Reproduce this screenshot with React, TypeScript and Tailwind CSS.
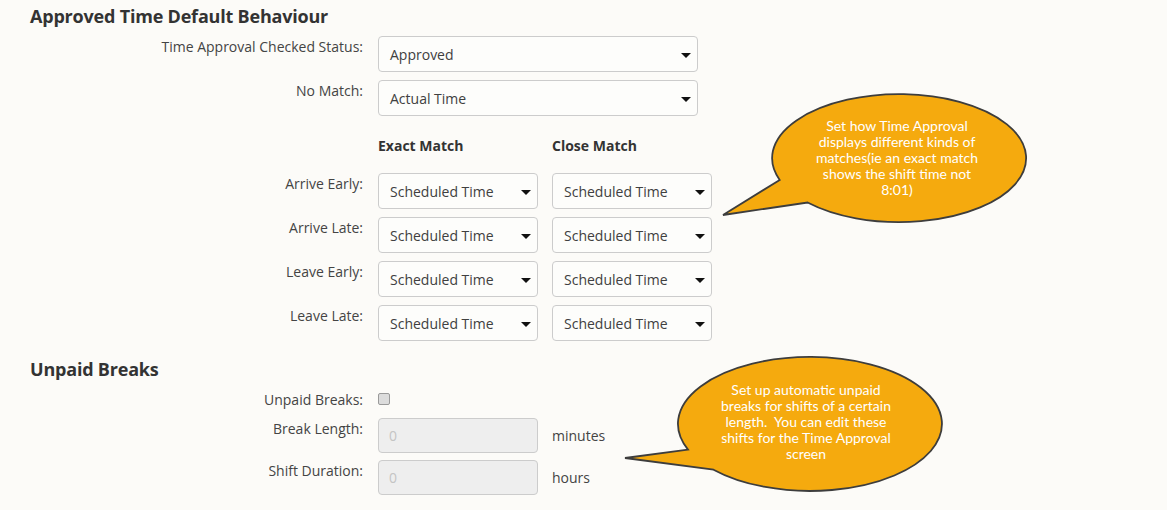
import React from "react";

const LABEL_W = "w-[333px]";

function Caret() {
  return (
    <span className="mt-[2px] inline-block h-0 w-0 border-l-[5px] border-r-[5px] border-t-[5px] border-l-transparent border-r-transparent border-t-[#111]" />
  );
}

function Select({ value, wide }: { value: string; wide?: boolean }) {
  return (
    <div
      className={`${wide ? "w-[320px]" : "w-[160px]"} flex h-[36px] items-center justify-between rounded-[4px] border border-[#cccccc] bg-[#fdfdfb] pl-[11px] pr-[6px] text-[14px] text-[#404040]`}
    >
      <span>{value}</span>
      <Caret />
    </div>
  );
}

function Row({ label, children }: { label: string; children: React.ReactNode }) {
  return (
    <div className="flex items-start">
      <div className={`${LABEL_W} text-right text-[14px] leading-[22px] text-[#444]`}>{label}</div>
      <div className="ml-[15px] flex items-center">{children}</div>
    </div>
  );
}

function DisabledInput({ unit }: { unit: string }) {
  return (
    <div className="flex items-center">
      <div className="flex h-[35px] w-[160px] items-center rounded-[4px] border border-[#cccccc] bg-[#eeeeee] pl-[10px] text-[14px] text-[#c4c4c4]">
        0
      </div>
      <span className="ml-[14px] text-[14px] text-[#444]">{unit}</span>
    </div>
  );
}

export default function App() {
  return (
    <div
      className="relative h-[510px] w-full overflow-hidden bg-[#fcfbf8]"
      style={{ fontFamily: '"Open Sans", "Liberation Sans", sans-serif' }}
    >
      <div className="pl-[30px] pt-[6px]">
        <h2 className="text-[18px] font-bold leading-[20px] tracking-[-0.2px] text-[#333]">Approved Time Default Behaviour</h2>

        <div className="mt-[10px] flex flex-col gap-[8px]">
          <Row label="Time Approval Checked Status:">
            <Select value="Approved" wide />
          </Row>
          <Row label="No Match:">
            <Select value="Actual Time" wide />
          </Row>
        </div>

        <div className="mt-[20px] flex">
          <div className={LABEL_W} />
          <div className="ml-[15px] flex gap-[14px] text-[14px] font-bold leading-[20px] text-[#333]">
            <span className="w-[160px]">Exact Match</span>
            <span className="w-[160px]">Close Match</span>
          </div>
        </div>

        <div className="mt-[17px] flex flex-col gap-[8px]">
          {["Arrive Early:", "Arrive Late:", "Leave Early:", "Leave Late:"].map((l) => (
            <Row key={l} label={l}>
              <div className="flex gap-[14px]">
                <Select value="Scheduled Time" />
                <Select value="Scheduled Time" />
              </div>
            </Row>
          ))}
        </div>

        <h2 className="mt-[18px] text-[18px] font-bold leading-[20px] tracking-[-0.2px] text-[#333]">Unpaid Breaks</h2>

        <div className="mt-[10px]">
          <Row label="Unpaid Breaks:">
            <div className="mt-[4px] h-[12px] w-[12px] rounded-[2px] border border-[#9a9a9a] bg-[#dcdcdc]" />
          </Row>
        </div>
        <div className="mt-[7px] flex flex-col gap-[7px]">
          <Row label="Break Length:">
            <DisabledInput unit="minutes" />
          </Row>
          <Row label="Shift Duration:">
            <DisabledInput unit="hours" />
          </Row>
        </div>
      </div>

      <svg
        className="pointer-events-none absolute left-0 top-0"
        width="1167"
        height="510"
        viewBox="0 0 1167 510"
      >
        <path
          d="M 779.7 179.9 A 127 64 0 1 1 807.6 202.5 L 723 215 Z"
          fill="#f5aa0e"
          stroke="#3d3d3d"
          strokeWidth="1.8"
          strokeLinejoin="miter"
        />
        <path
          d="M 688 449.6 A 132 67 0 1 1 713.5 469.7 L 625 458 Z"
          fill="#f5aa0e"
          stroke="#3d3d3d"
          strokeWidth="1.8"
          strokeLinejoin="miter"
        />
      </svg>

      <div
        className="pointer-events-none absolute left-[787px] top-[118px] w-[220px] text-center text-[14px] leading-[16px] text-white"
        style={{ fontFamily: 'Lato, "Open Sans", sans-serif' }}
      >
        <div>Set how Time Approval</div>
        <div>displays different kinds of</div>
        <div>matches(ie an exact match</div>
        <div>shows the shift time not</div>
        <div>8:01)</div>
      </div>

      <div
        className="pointer-events-none absolute left-[696px] top-[382px] w-[220px] text-center text-[14px] leading-[16px] text-white"
        style={{ fontFamily: 'Lato, "Open Sans", sans-serif' }}
      >
        <div>Set up automatic unpaid</div>
        <div>breaks for shifts of a certain</div>
        <div className="whitespace-pre">length.  You can edit these</div>
        <div>shifts for the Time Approval</div>
        <div>screen</div>
      </div>
    </div>
  );
}
